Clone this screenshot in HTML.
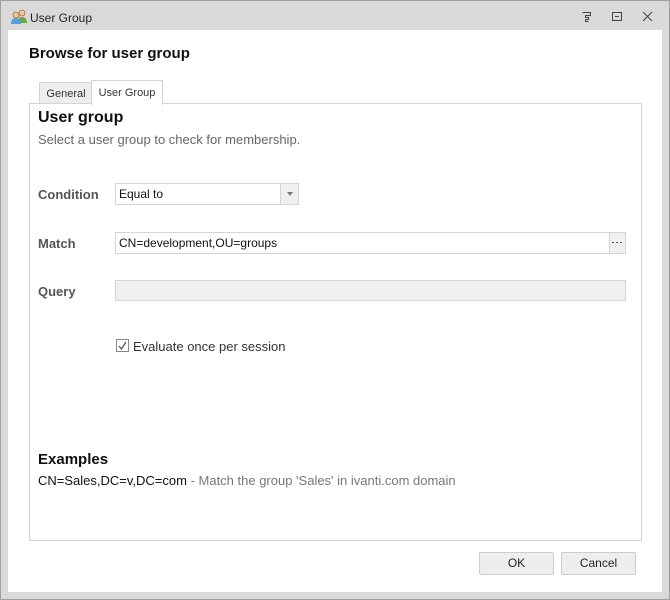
<!DOCTYPE html>
<html><head><style>
body{margin:0;width:670px;height:600px;background:#d9d9d9;font-family:"Liberation Sans",sans-serif;position:relative;overflow:hidden}
.a{position:absolute}
.frame{left:0;top:0;width:668px;height:598px;border:1px solid #a0a0a0;}
</style></head><body>
<div class="a frame"></div>
<svg class="a" style="left:10px;top:9px" width="18" height="16" viewBox="0 0 18 16">
<circle cx="12" cy="4" r="3" fill="#f2c58f" stroke="#7a5a3a" stroke-width=".6"/><path d="M7 14c0-4 2-6 5-6s5 2 5 6z" fill="#6aa84f"/>
<circle cx="6" cy="6" r="3" fill="#f2c58f" stroke="#7a5a3a" stroke-width=".6"/><path d="M1 15c0-4 2-6 5-6s5 2 5 6z" fill="#4ea3e0"/></svg>
<div class="a" style="left:30px;top:11px;font-size:12px;color:#222">User Group</div>
<svg class="a" style="left:581px;top:11px" width="75" height="12" viewBox="0 0 75 12" fill="none" stroke="#444" stroke-width="1">
<path d="M1.5 1.5h8v3h-5v2h3v2h-3M4.5 8.5v2h3"/><rect x="31.5" y="1.5" width="9" height="8"/><path d="M34 5.5h4"/><path d="M62 1l9 9M71 1l-9 9"/></svg>
<div class="a" style="left:8px;top:30px;width:654px;height:562px;background:#fff"></div>
<div class="a" style="left:29px;top:45px;font-size:15px;font-weight:bold;color:#111">Browse for user group</div>
<div class="a" style="left:39px;top:82px;width:52px;height:20px;background:#eee;border:1px solid #d4d4d4;border-bottom:none;font-size:11px;color:#333;text-align:center;line-height:22px">General</div>
<div class="a" style="left:91px;top:80px;width:70px;height:24px;background:#fff;border:1px solid #d4d4d4;border-bottom:none;font-size:11px;color:#333;text-align:center;line-height:24px;z-index:2">User Group</div>
<div class="a" style="left:29px;top:103px;width:611px;height:436px;border:1px solid #d4d4d4"></div>
<div class="a" style="left:38px;top:109px;font-size:16px;font-weight:bold;color:#111">User group</div>
<div class="a" style="left:38px;top:132px;font-size:13px;color:#666">Select a user group to check for membership.</div>
<div class="a" style="left:38px;top:187px;font-size:13px;font-weight:bold;color:#555">Condition</div>
<div class="a" style="left:38px;top:236px;font-size:13px;font-weight:bold;color:#555">Match</div>
<div class="a" style="left:38px;top:284px;font-size:13px;font-weight:bold;color:#555">Query</div>
<div class="a" style="left:115px;top:183px;width:182px;height:20px;border:1px solid #d4d4d4;font-size:12px;line-height:20px;color:#111"><span style="padding-left:3px">Equal to</span>
<div class="a" style="right:0;top:0;width:17px;height:20px;background:#f0f0f0;border-left:1px solid #d4d4d4"></div>
<div class="a" style="right:5px;top:8px;border:3.5px solid transparent;border-top:4px solid #777"></div></div>
<div class="a" style="left:115px;top:232px;width:509px;height:20px;border:1px solid #d4d4d4;font-size:12px;line-height:20px;color:#111"><span style="padding-left:3px">CN=development,OU=groups</span>
<div class="a" style="right:0;top:0;width:15px;height:20px;background:#f0f0f0;border-left:1px solid #d4d4d4"></div>
<svg class="a" style="right:3px;top:9px" width="10" height="2"><rect x="0" y="0" width="2" height="1" fill="#555"/><rect x="4" y="0" width="2" height="1" fill="#555"/><rect x="8" y="0" width="2" height="1" fill="#555"/></svg></div>
<div class="a" style="left:115px;top:280px;width:509px;height:19px;border:1px solid #d4d4d4;background:#f0f0f0"></div>
<div class="a" style="left:116px;top:339px;width:11px;height:11px;border:1px solid #888;background:#fff"></div>
<svg class="a" style="left:117px;top:340px" width="11" height="11"><path d="M2 6l2.5 3L9 2" stroke="#555" stroke-width="1.3" fill="none"/></svg>
<div class="a" style="left:133px;top:339px;font-size:13px;color:#333">Evaluate once per session</div>
<div class="a" style="left:38px;top:451px;font-size:15px;font-weight:bold;color:#111">Examples</div>
<div class="a" style="left:38px;top:473px;font-size:13px;color:#111">CN=Sales,DC=v,DC=com <span style="color:#777">- Match the group 'Sales' in ivanti.com domain</span></div>
<div class="a" style="left:479px;top:552px;width:73px;height:21px;border:1px solid #ccc;background:#eee;border-radius:2px;font-size:12px;text-align:center;line-height:21px;color:#222">OK</div>
<div class="a" style="left:561px;top:552px;width:73px;height:21px;border:1px solid #ccc;background:#eee;border-radius:2px;font-size:12px;text-align:center;line-height:21px;color:#222">Cancel</div>
</body></html>
